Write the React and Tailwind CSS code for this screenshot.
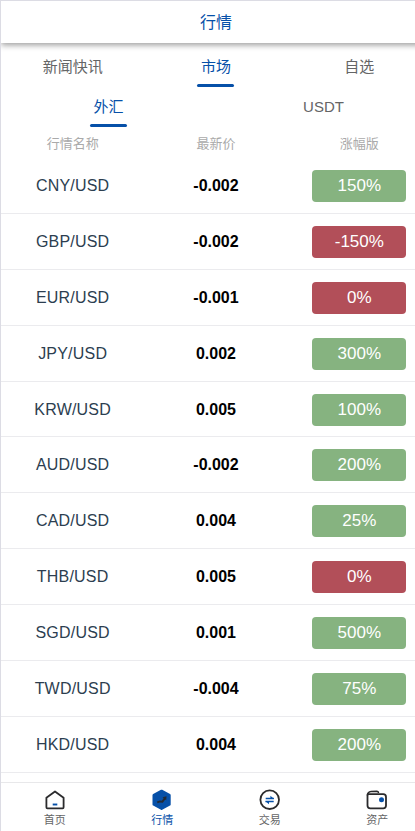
const tabs = ["新闻快讯", "市场", "自选"];

const subTabs = ["外汇", "USDT"];

const columns = ["行情名称", "最新价", "涨幅版"];

const quotes = [
  { pair: "CNY/USD", price: "-0.002", change: "150%", up: true },
  { pair: "GBP/USD", price: "-0.002", change: "-150%", up: false },
  { pair: "EUR/USD", price: "-0.001", change: "0%", up: false },
  { pair: "JPY/USD", price: "0.002", change: "300%", up: true },
  { pair: "KRW/USD", price: "0.005", change: "100%", up: true },
  { pair: "AUD/USD", price: "-0.002", change: "200%", up: true },
  { pair: "CAD/USD", price: "0.004", change: "25%", up: true },
  { pair: "THB/USD", price: "0.005", change: "0%", up: false },
  { pair: "SGD/USD", price: "0.001", change: "500%", up: true },
  { pair: "TWD/USD", price: "-0.004", change: "75%", up: true },
  { pair: "HKD/USD", price: "0.004", change: "200%", up: true },
];

function HomeIcon() {
  return (
    <svg className="w-[22px] h-[22px]" viewBox="0 0 22 22" fill="none">
      <path
        d="M2.4 8.7 11 2.4l8.6 6.3v9.6a1 1 0 0 1-1 1H3.4a1 1 0 0 1-1-1z"
        stroke="#2b2b2d"
        strokeWidth="1.8"
        strokeLinejoin="round"
      />
      <path d="M8.7 15.5h4.6" stroke="#0650a8" strokeWidth="1.9" />
    </svg>
  );
}

function MarketIcon() {
  return (
    <svg className="w-[22px] h-[22px]" viewBox="0 0 22 22" fill="none">
      <path
        d="M10.6 2 18.4 6.2v9.2l-7.8 4.2-7.8-4.2V6.2z"
        fill="#0650a8"
        stroke="#0650a8"
        strokeWidth="2.6"
        strokeLinejoin="round"
      />
      <path d="m6.2 13.4 2.8-1 2.4.3 2.6-3.500" stroke="#222a35" strokeWidth="2" />
      <path d="m11.5 8.2 4-1-.3 4z" fill="#222a35" />
    </svg>
  );
}

function TradeIcon() {
  return (
    <svg className="w-[22px] h-[22px]" viewBox="0 0 22 22" fill="none">
      <circle cx="10.7" cy="10.7" r="9.3" stroke="#2b2b2d" strokeWidth="1.8" />
      <path d="M6.7 9.5h8.2M14.7 12.5H6.5" stroke="#0650a8" strokeWidth="1.6" />
      <path d="M11.4 6.7v3.2h3.8zM10 15.3v-3.2H6.2z" fill="#0650a8" />
    </svg>
  );
}

function WalletIcon() {
  return (
    <svg className="w-[22px] h-[22px]" viewBox="0 0 22 22" fill="none">
      <path
        d="M1.5 6.5C1.5 3.7 3 2.7 5.1 2.5l5.9-.3c1 0 1.5.6 1.5 1.7"
        stroke="#2b2b2d"
        strokeWidth="1.6"
      />
      <path
        d="M1.5 5.8v10.8a2.8 2.8 0 0 0 2.8 2.8h12.9a2.8 2.8 0 0 0 2.8-2.8V7.9a2.8 2.8 0 0 0-2.8-2.8H4c-1.5 0-2.5 0-2.500.9z"
        stroke="#2b2b2d"
        strokeWidth="1.8"
      />
      <circle cx="15.5" cy="10.8" r="2.5" fill="#0650a8" />
    </svg>
  );
}

const navItems = [
  { label: "首页", icon: HomeIcon },
  { label: "行情", icon: MarketIcon, active: true },
  { label: "交易", icon: TradeIcon },
  { label: "资产", icon: WalletIcon },
];

function Tab({ label, active }) {
  return (
    <div
      className={`flex flex-col items-center text-[15px] leading-5 ${
        active ? "text-[#0650a8]" : "text-[#646566]"
      }`}
    >
      <span>{label}</span>
      {active && <span className="mt-[7px] h-[3px] w-[37px] rounded-full bg-[#0650a8]" />}
    </div>
  );
}

export default function App() {
  return (
    <div className="h-[831px] w-full overflow-hidden border-t border-l border-[#dcdce4] bg-white font-['Liberation_Sans','Noto_Sans_CJK_SC',sans-serif]">
      <div className="flex h-[830px] w-[430px] flex-col">
        <header className="flex h-[42px] shrink-0 items-center justify-center pt-[2px] text-base text-[#0650a8] shadow-[0_2px_6px_rgba(0,0,0,0.4)]">
          行情
        </header>

        {/* Tabs */}
        <div className="grid h-[53px] shrink-0 grid-cols-3 pt-[14px]">
          {tabs.map((label) => (
            <Tab key={label} label={label} active={label === "市场"} />
          ))}
        </div>
        <div className="grid h-[36px] shrink-0 grid-cols-2 pt-[1px]">
          {subTabs.map((label) => (
            <Tab key={label} label={label} active={label === "外汇"} />
          ))}
        </div>

        {/* Quotes */}
        <div className="grid h-[26px] shrink-0 grid-cols-3 pt-[2px] text-center text-[13px] leading-5 text-[#aaaaaa]">
          {columns.map((label) => (
            <span key={label}>{label}</span>
          ))}
        </div>
        <div className="shrink-0">
          {quotes.map((quote) => (
            <div
              key={quote.pair}
              className="grid h-[55.9px] grid-cols-3 items-center border-b border-[#ebebee] pt-px text-center text-base"
            >
              <span className="tracking-[0.2px] text-[#2c3e50]">{quote.pair}</span>
              <span className="font-bold text-black">{quote.price}</span>
              <span
                className={`mx-auto h-8 w-[94px] rounded-[4px] text-[17px] leading-8 text-white ${
                  quote.up ? "bg-[#86b380]" : "bg-[#b24f59]"
                }`}
              >
                {quote.change}
              </span>
            </div>
          ))}
        </div>

        <nav className="mt-auto grid h-[49px] shrink-0 grid-cols-4 border-t border-[#e8e8ea] bg-white">
          {navItems.map(({ label, icon: Icon, active }) => (
            <div
              key={label}
              className={`flex flex-col items-center pt-[6px] text-[11px] leading-[18px] ${
                active ? "text-[#0650a8]" : "text-[#646566]"
              }`}
            >
              <Icon />
              <span>{label}</span>
            </div>
          ))}
        </nav>
      </div>
    </div>
  );
}
